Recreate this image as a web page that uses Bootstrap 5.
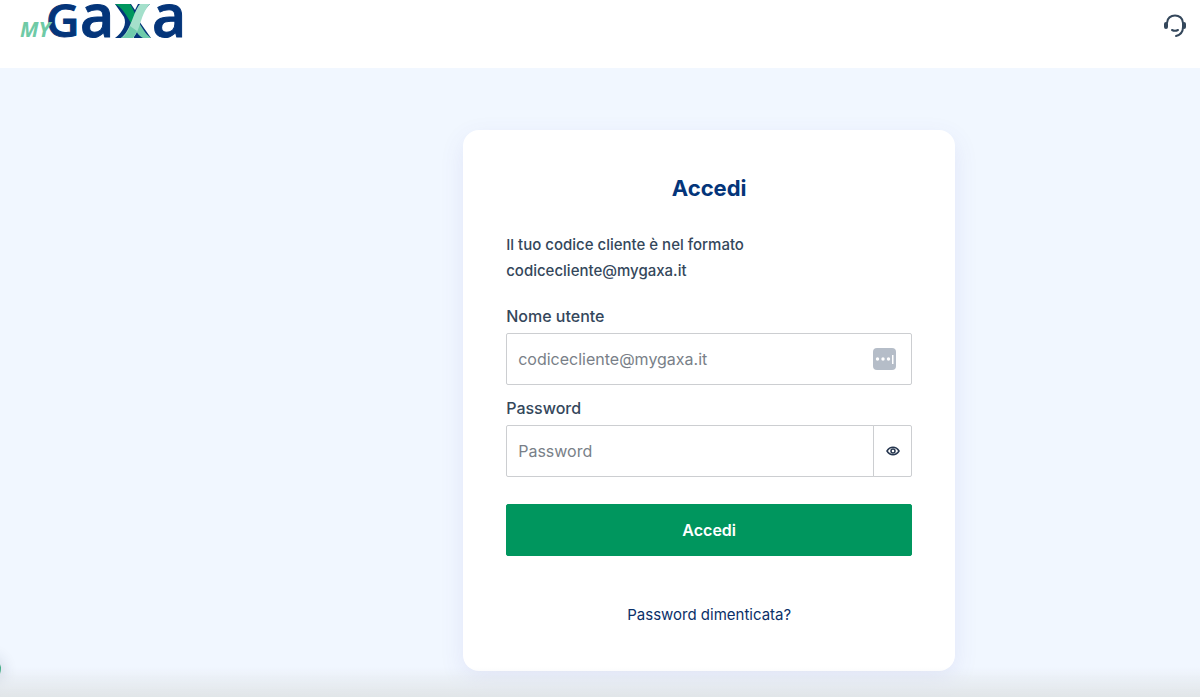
<!DOCTYPE html>
<html lang="it">
<head>
<meta charset="utf-8">
<meta name="viewport" content="width=device-width, initial-scale=1">
<title>MyGaxa - Accedi</title>
<link href="https://cdn.jsdelivr.net/npm/bootstrap@5.3.0/dist/css/bootstrap.min.css" rel="stylesheet">
<style>
  :root { --navy: #04357a; --slate: #34475b; --green: #00965e; }
  body { font-family: Inter, "Liberation Sans", sans-serif; background: #f1f7ff; color: var(--slate); }
  .site-header { height: 68px; padding: 0 12px 0 20px; }
  .brand-logo { display: block; overflow: visible; }
  .brand-logo .word { font-family: "Open Sans", sans-serif; font-weight: 600; fill: var(--navy); stroke: var(--navy); stroke-width: 1; }
  .brand-logo .prefix { font-family: "Open Sans", sans-serif; font-weight: 700; font-style: italic; fill: #6fcaa6; }
  .help-button { height: 50px; color: #34475b; }
  .login-area { padding: 62px 16px 26px; }
  .login-card { border: 0; border-radius: 16px; padding: 43px; box-shadow: 0 8px 24px rgba(90, 80, 190, .1); max-width: 492px; margin: 0 auto; }
  .login-title { font-size: 22px; line-height: 30px; font-weight: 700; color: var(--navy); margin-bottom: 29px; }
  .login-hint { font-size: 15px; line-height: 26px; font-weight: 500; margin-bottom: 20px; }
  .login-card .form-label { font-size: 16px; line-height: 24px; font-weight: 500; margin-bottom: 5px; }
  .login-card .form-control { height: 52px; font-size: 16px; padding: 0 11px; border-radius: 2px; border-color: #ccced1; }
  .login-card .form-control::placeholder { color: #797f88; opacity: 1; }
  .field { margin-bottom: 11px; }
  .vault-icon { top: 15px; right: 16px; }
  .reveal { width: 39px; border: 1px solid #ccced1; border-radius: 2px; color: #26364f; }
  .login-submit { height: 52px; font-size: 16px; font-weight: 600; border-radius: 2px; margin: 27px 0 46px;
    --bs-btn-color: #fff; --bs-btn-bg: var(--green); --bs-btn-border-color: var(--green);
    --bs-btn-hover-color: #fff; --bs-btn-hover-bg: #007f50; --bs-btn-hover-border-color: #007f50; }
  .forgot { font-size: 15px; line-height: 26px; color: #0b3068; }
  .bottom-shade { height: 30px; background: linear-gradient(rgba(226, 230, 233, 0), rgba(224, 228, 231, .95)); pointer-events: none; }
  .side-tab { left: -23px; bottom: 16px; width: 24px; height: 24px; background: #3dab83; box-shadow: 0 2px 14px 4px rgba(30, 50, 70, .12); }
  @media (min-width: 992px) {
    .login-area { padding-left: 38.6%; padding-right: 20.4%; }
    .login-card { max-width: none; }
  }
</style>
</head>
<body class="min-vh-100 position-relative overflow-x-hidden">
<header class="site-header bg-white d-flex justify-content-between align-items-start">
  <a href="#" aria-label="MyGaxa">
    <svg class="brand-logo" width="164" height="42" viewBox="20 0 164 42" aria-hidden="true">
      <text class="word" x="46" y="37" font-size="46">G</text>
      <text class="word" x="80" y="37" font-size="59">a</text>
      <text class="word" x="152" y="37" font-size="59">a</text>
      <path d="M115 38C123 32 127 24 124 17L115 4H131L135 10L138 4H150C143 11 142 15 139 21L151 38H134L131 32L128 38Z" fill="#04357a"/>
      <path d="M115 4H130C133 8 134 13 138 18L132 25C127 17 124 9 115 4Z" fill="#00965e"/>
      <path d="M138 21C142 27 145 34 151 38H143C138 36 136 30 134 27Z" fill="#70cbab"/>
      <path d="M150 4H140C133 12 131 31 121 38H133C141 30 140 14 150 4Z" fill="#a4e0cb"/>
      <path d="M130 26C128 32 125 36 121 38H133L137 31Z" fill="#70cbab"/>
      <text class="prefix" x="20" y="37" font-size="21">MY</text>
    </svg>
  </a>
  <button type="button" class="help-button btn p-0 border-0" aria-label="Assistenza">
    <svg width="26" height="26" viewBox="0 0 26 26" fill="none" stroke="currentColor" stroke-width="2" stroke-linecap="round" aria-hidden="true">
      <path d="M5 11C5 1 21 1 21 11v4c0 6-3 8-7 9M10 18c2 1 4 1 6 0"/>
      <rect x="3" y="11" width="2" height="5" rx="1" fill="currentColor"/>
      <rect x="21" y="11" width="2" height="5" rx="1" fill="currentColor"/>
    </svg>
  </button>
</header>

<main class="login-area">
  <section class="login-card card">
    <h1 class="login-title text-center">Accedi</h1>
    <p class="login-hint">Il tuo codice cliente è nel formato<br>codicecliente@mygaxa.it</p>
    <form>
      <label class="form-label" for="username">Nome utente</label>
      <div class="field position-relative">
        <input class="form-control pe-5" id="username" type="text" placeholder="codicecliente@mygaxa.it">
        <svg class="vault-icon position-absolute" width="23" height="22" viewBox="0 0 23 22" aria-hidden="true">
          <rect width="23" height="22" rx="4" fill="#b5bdc8"/>
          <g fill="#fff"><circle cx="4.5" cy="11" r="1.7"/><circle cx="10" cy="11" r="1.7"/><circle cx="15.5" cy="11" r="1.7"/><rect x="19" y="7" width="1.5" height="9"/></g>
        </svg>
      </div>
      <label class="form-label" for="password">Password</label>
      <div class="input-group">
        <input class="form-control" id="password" type="password" placeholder="Password">
        <button class="reveal btn p-0 d-flex align-items-center justify-content-center" type="button" aria-label="Mostra password">
          <svg width="14" height="10" viewBox="0 0 14 10" fill="none" stroke="currentColor" stroke-width="1.5" aria-hidden="true">
            <path d="M1 5C4 0 10 0 13 5C10 10 4 10 1 5Z"/><circle cx="7" cy="5" r="2"/>
          </svg>
        </button>
      </div>
      <button class="login-submit btn w-100" type="submit">Accedi</button>
    </form>
    <div class="text-center"><a class="forgot text-decoration-none" href="#">Password dimenticata?</a></div>
  </section>
</main>
<div class="side-tab position-fixed rounded-circle"></div>
<div class="bottom-shade position-fixed bottom-0 start-0 end-0"></div>
<script src="https://cdn.jsdelivr.net/npm/bootstrap@5.3.0/dist/js/bootstrap.bundle.min.js"></script>
</body>
</html>
